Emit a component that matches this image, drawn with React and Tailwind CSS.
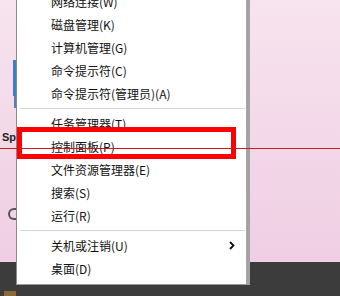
import React from "react";

const groups = [
  ["网络连接(W)", "磁盘管理(K)", "计算机管理(G)", "命令提示符(C)", "命令提示符(管理员)(A)"],
  ["任务管理器(T)", "控制面板(P)", "文件资源管理器(E)", "搜索(S)", "运行(R)"],
  ["关机或注销(U)", "桌面(D)"],
];

function MenuItem({ label, arrow }) {
  return (
    <div className="flex h-[23px] items-center pl-[34px] pr-[10px]">
      <span className="flex-1 whitespace-nowrap">{label}</span>
      {arrow && (
        <svg width="6" height="9" viewBox="0 0 6 9" className="mr-[1px]">
          <path d="M1 1 L4.5 4.5 L1 8" fill="none" stroke="#111" strokeWidth="1.8" />
        </svg>
      )}
    </div>
  );
}

export default function App() {
  return (
    <div
      className="relative w-[340px] h-[296px] overflow-hidden flex flex-col text-[12px] text-[#111]"
      style={{ fontFamily: '"Noto Sans CJK SC", "Noto Sans", sans-serif' }}
    >
      {/* desktop */}
      <div className="h-[262px] bg-gradient-to-b from-[#f7e4ee] to-[#efcee3] flex">
        <div className="w-[16px] flex flex-col">
          <div className="h-[60px]" />
          <div className="ml-[13px] w-[3px] h-[36px] bg-[#3b7fc4]" />
          <div className="ml-[14px] w-[2px] h-[12px] bg-[#5a7fa8]" />
          <div className="h-[22px]" />
          <span className="text-[11px] leading-[14px] font-bold text-[#222] pl-[2px]" style={{ fontFamily: '"Liberation Sans", sans-serif' }}>
            Sp
          </span>
          <div className="h-[64px]" />
          <div className="ml-[8px] w-[8px] h-[12px] rounded-l-full border-2 border-r-0 border-[#555]" />
        </div>
      </div>
      {/* taskbar */}
      <div className="flex-1 bg-[#3c3c3c] flex flex-col justify-end">
        <div className="ml-[4px] w-[12px] h-[5px] bg-[#8a6a3a]" />
      </div>

      {/* context menu */}
      <div className="absolute left-[16px] top-0 w-[234px] h-[285px] bg-white border-l border-[#8a8a8a] border-r-4 border-r-[#a3a3a3] border-b border-b-[#9a9a9a]">
        <div className="-mt-[10px]">
          {groups.map((g, gi) => (
            <div key={gi}>
              {gi > 0 && (
                <div className="h-[7px] flex items-center">
                  <div className="ml-[3px] mr-[1px] h-px flex-1 bg-[#d6d6d6]" />
                </div>
              )}
              {g.map((label) => (
                <MenuItem key={label} label={label} arrow={label === "关机或注销(U)"} />
              ))}
            </div>
          ))}
        </div>
      </div>

      {/* annotations */}
      <div className="absolute left-[17px] top-[127px] w-[219px] h-[32px] border-[5px] border-[#ff0000]" />
      <div className="absolute left-0 top-[148px] w-full h-px bg-[#d01818]" />
    </div>
  );
}
